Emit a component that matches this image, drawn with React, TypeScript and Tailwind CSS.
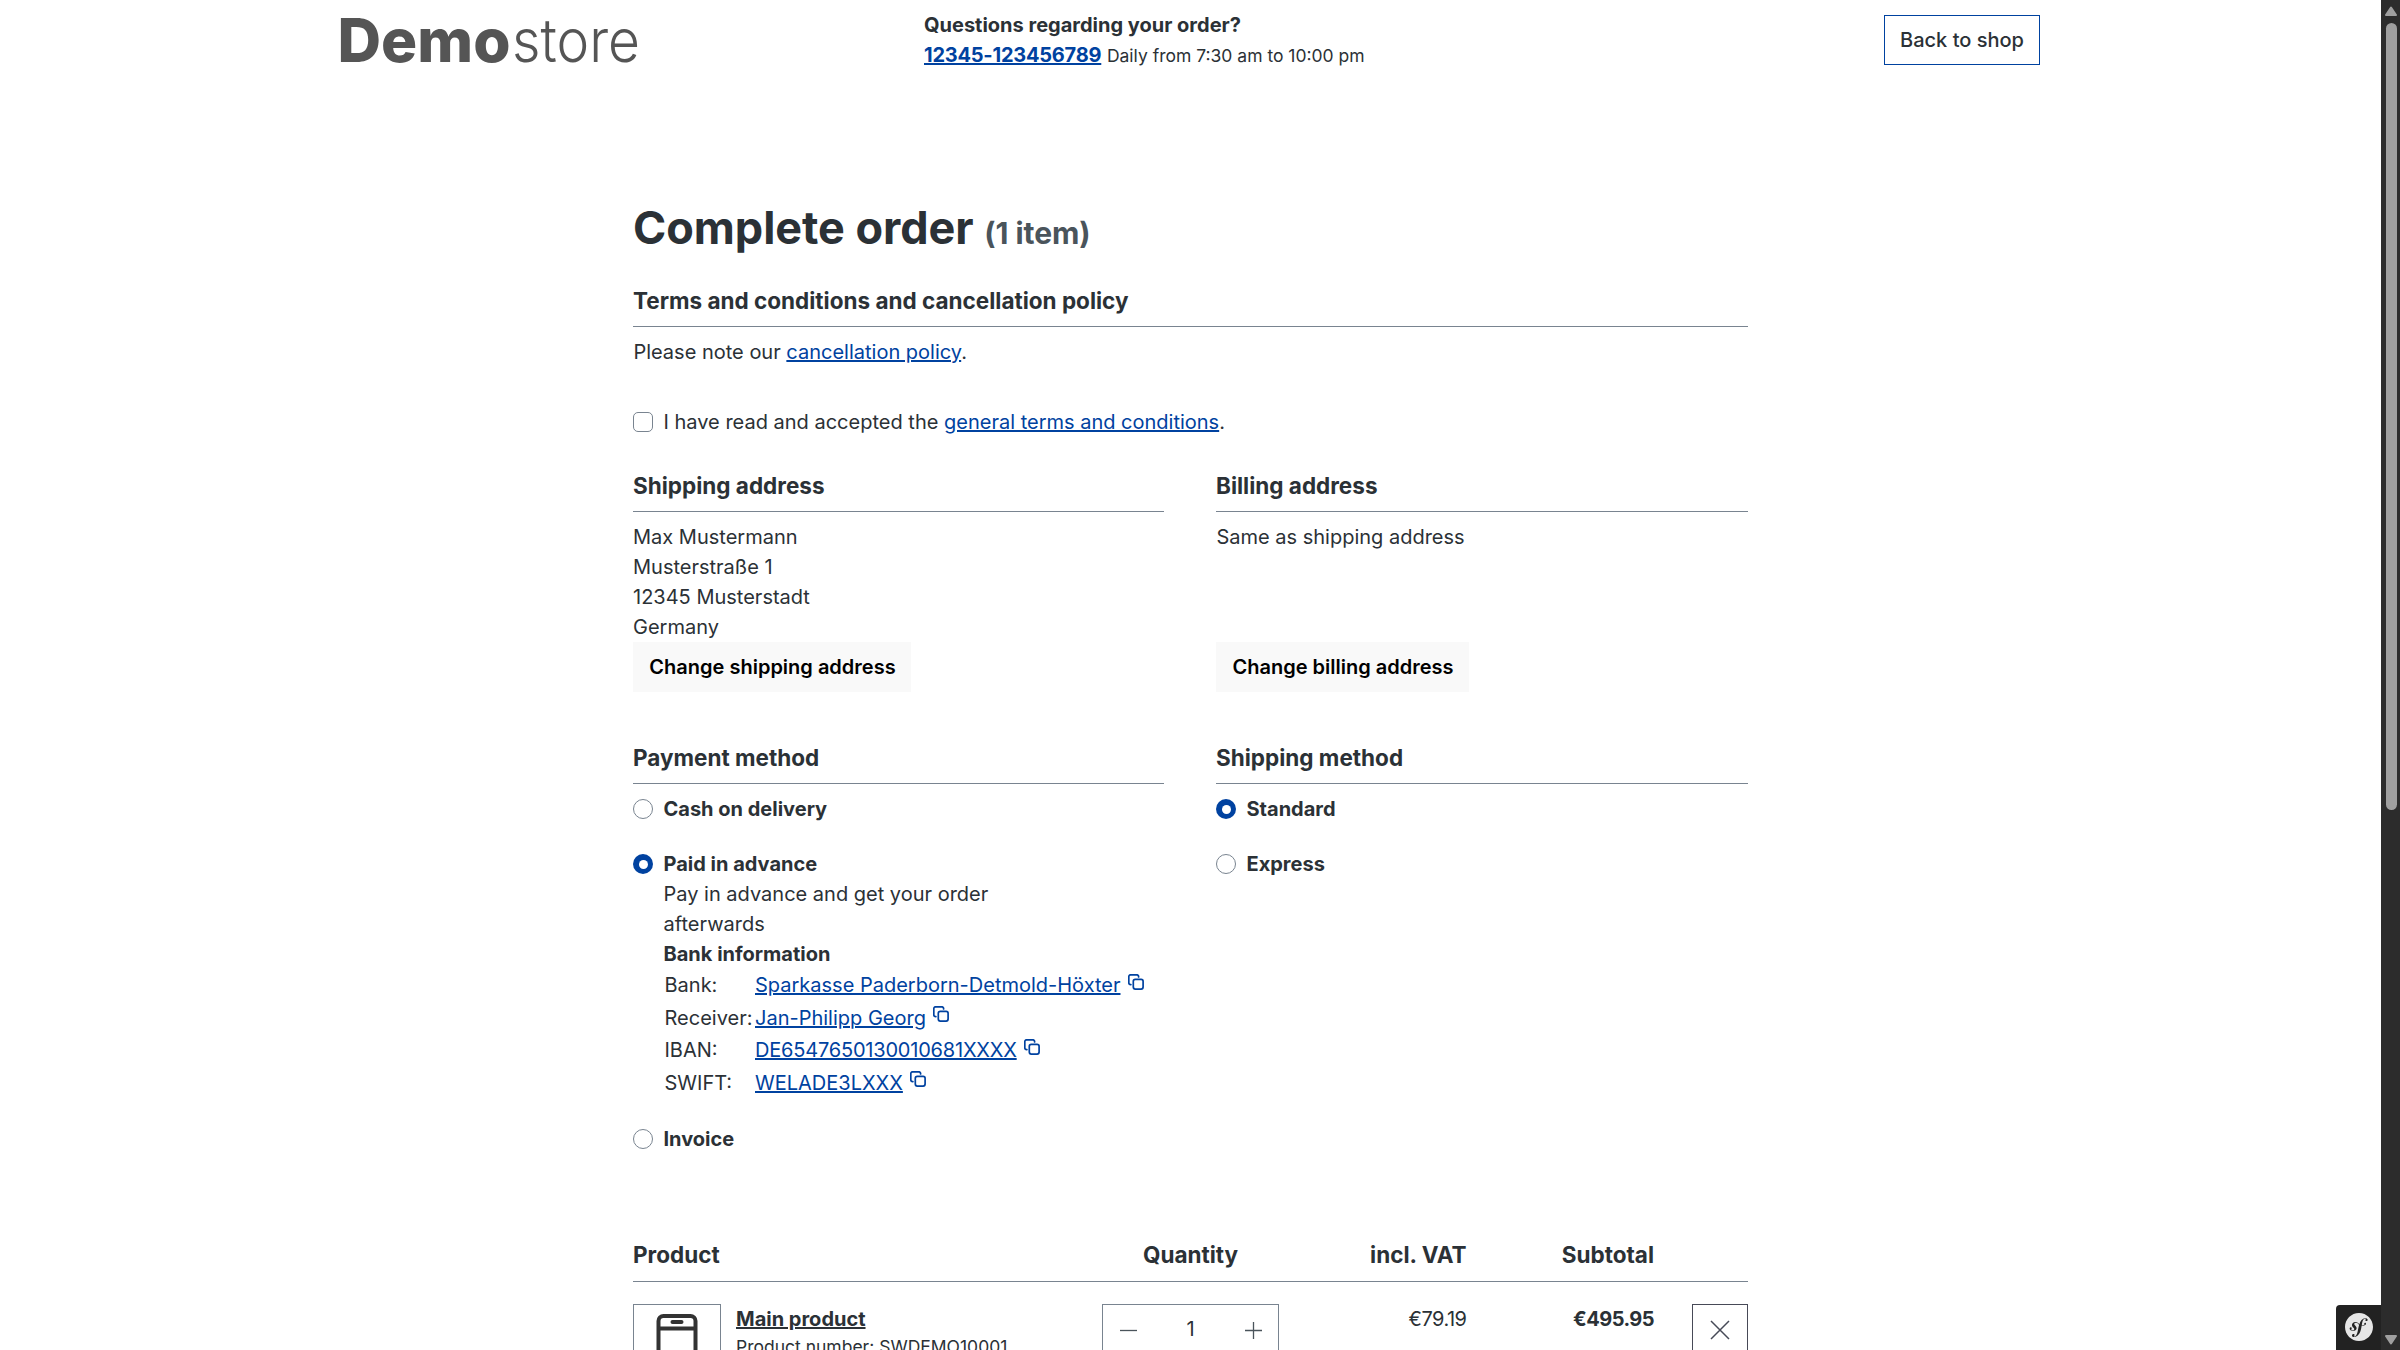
import type { ReactNode } from 'react';
import { SiSymfony } from 'react-icons/si';

const HEADING = 'h-[43px] border-b border-[#798490] text-[22.5px] leading-[34px] font-bold text-[#2b3136]';

function Link({ children }: { children: ReactNode }) {
  return (
    <a href="#" className="text-[#0042a0] underline">
      {children}
    </a>
  );
}

function Heading({ children }: { children: ReactNode }) {
  return <h2 className={HEADING}>{children}</h2>;
}

function Radio({ checked }: { checked?: boolean }) {
  return checked ? (
    <span className="mt-[5px] flex size-5 shrink-0 items-center justify-center rounded-full bg-[#0042a0]">
      <span className="size-[9px] rounded-full bg-white" />
    </span>
  ) : (
    <span className="mt-[5px] size-5 shrink-0 rounded-full border border-[#798490] bg-white" />
  );
}

function Option({ label, checked, children }: { label: string; checked?: boolean; children?: ReactNode }) {
  return (
    <div className="flex gap-[10.5px]">
      <Radio checked={checked} />
      <div>
        <div className="font-bold">{label}</div>
        {children}
      </div>
    </div>
  );
}

function CopyIcon() {
  return (
    <svg className="ml-[7px] mt-[3.5px] size-4 shrink-0" viewBox="0 0 16 16" fill="none" stroke="#0042a0" strokeWidth="1.7" strokeLinecap="round">
      <rect x="5.3" y="5.3" width="9.8" height="9.8" rx="2" />
      <path d="M2.9 10.6h-.3A1.8 1.8 0 0 1 .8 8.8V2.6A1.8 1.8 0 0 1 2.6.8H8.8a1.8 1.8 0 0 1 1.8 1.8v.3" />
    </svg>
  );
}

const BANK = [
  { label: 'Bank:', value: 'Sparkasse Paderborn-Detmold-Höxter', spacing: '' },
  { label: 'Receiver:', value: 'Jan-Philipp Georg', spacing: '' },
  { label: 'IBAN:', value: 'DE6547650130010681XXXX', spacing: 'tracking-[-0.2px]' },
  { label: 'SWIFT:', value: 'WELADE3LXXX', spacing: '' },
];

function Header() {
  return (
    <header className="ml-[331px] flex h-[65px] w-[1709px] items-start">
      <svg className="h-[80px] w-[320px] shrink-0" viewBox="0 0 320 80" fill="#555555">
        <text x="6.5" y="62" fontFamily="Inter" fontSize="60.5" fontWeight="850" textLength="173" lengthAdjust="spacingAndGlyphs">
          Demo
        </text>
        <text x="181" y="62" fontFamily="Inter" fontSize="60" fontWeight="300" textLength="128" lengthAdjust="spacingAndGlyphs">
          store
        </text>
      </svg>
      <div className="ml-[273px] mt-2.5 flex-1 leading-[30px]">
        <div className="font-bold">Questions regarding your order?</div>
        <div>
          <a href="#" className="font-bold tracking-[-0.22px] text-[#0042a0] underline">12345-123456789</a>{' '}
          <span className="text-[17.5px]">Daily from 7:30 am to 10:00 pm</span>
        </div>
      </div>
      <a href="#" className="mt-[15px] flex h-[50px] w-[156px] items-center justify-center border border-[#0042a0] font-medium">
        Back to shop
      </a>
    </header>
  );
}

function Cart() {
  return (
    <section className="mt-[84px]">
      <div className="flex h-11 border-b border-[#798490] text-[22.5px] leading-[34px] font-bold">
        <div className="w-[469px]">Product</div>
        <div className="w-[177px] text-center">Quantity</div>
        <div className="w-[187.5px] text-right">incl. VAT</div>
        <div className="w-[187.5px] text-right">Subtotal</div>
      </div>
      <div className="mt-[22px] flex h-[88px] items-start">
        <div className="flex size-[88px] shrink-0 justify-center border border-[#798490] pt-[9px]">
          <svg className="h-[68px] w-[42px]" viewBox="0 0 42 68" fill="none" stroke="#333333" strokeWidth="4">
            <rect x="2.5" y="2" width="37" height="64" rx="5" />
            <path d="M2.5 14.5h37" />
            <path d="M16.5 8h9" strokeLinecap="round" />
          </svg>
        </div>
        <div className="ml-[15px] w-[366px] shrink-0">
          <a href="#" className="block font-bold underline">Main product</a>
          <div className="text-[17.5px] leading-[26px]">Product number: SWDEMO10001</div>
        </div>
        <div className="flex h-[53px] w-[177px] shrink-0 items-center justify-between border border-[#798490] px-[15px]">
          <svg className="size-5" viewBox="0 0 20 20" stroke="#4a545b" strokeWidth="1.3"><path d="M2 9.5h17" /></svg>
          <span className="-mt-[3px]">1</span>
          <svg className="size-5" viewBox="0 0 20 20" stroke="#4a545b" strokeWidth="1.3"><path d="M2 9.500h17M10.500 1v17" /></svg>
        </div>
        <div className="w-[187.5px] text-right tracking-[-0.5px]">€79.19</div>
        <div className="w-[187.5px] text-right font-bold tracking-[-0.55px]">€495.95</div>
        <div className="ml-[38px] flex h-[53px] w-14 shrink-0 items-center justify-center border border-[#474a57] pb-px">
          <svg className="size-5" viewBox="0 0 20 20" stroke="#474a57" strokeWidth="1.5"><path d="M1 1l18 18M19 1L1 19" /></svg>
        </div>
      </div>
    </section>
  );
}

export default function App() {
  return (
    <div className="flex h-[1350px] w-[2400px] overflow-hidden bg-white font-[Inter,sans-serif] text-[20px] leading-[30px] text-[#2b3136]">
      <div className="relative w-[2381px] shrink-0 overflow-hidden">
        <Header />
        <main className="ml-[633px] mt-[136px] w-[1115px]">
          <h1 className="h-[54px] text-[45px] leading-[54px] font-bold tracking-[-0.04px]">
            Complete order <small className="text-[30px] text-[#4a545b]">(1 item)</small>
          </h1>
          <section className="mt-[29px]">
            <Heading>Terms and conditions and cancellation policy</Heading>
            <p className="mt-2.5 pl-[0.4px]">
              Please note our <Link>cancellation policy</Link>.
            </p>
            <div className="mt-10 flex gap-[10.5px]">
              <span className="mt-[5px] size-5 rounded-[5px] border border-[#798490]" />
              <span>
                I have read and accepted the <Link>general terms and conditions</Link>.
              </span>
            </div>
          </section>
          <div className="mt-8 grid grid-cols-[531px_532px] gap-x-[52px]">
            <section>
              <Heading>Shipping address</Heading>
              <address className="mt-2.5 h-[120px] not-italic">
                Max Mustermann<br />Musterstraße 1<br />12345 Musterstadt<br />Germany
              </address>
              <button className="flex h-[50px] w-[278px] items-center justify-center bg-[#f9f9f9] pl-px font-semibold text-black">
                Change shipping address
              </button>
            </section>
            <section>
              <Heading>Billing address</Heading>
              <p className="mt-2.5 h-[120px] pl-[0.4px]">Same as shipping address</p>
              <button className="flex h-[50px] w-[253px] items-center justify-center bg-[#f9f9f9] pl-px font-semibold text-black">
                Change billing address
              </button>
            </section>
          </div>
          <div className="mt-[49px] grid grid-cols-[531px_532px] gap-x-[52px]">
            <section>
              <Heading>Payment method</Heading>
              <div className="mt-2.5 flex flex-col gap-[25px]">
                <Option label="Cash on delivery" />
                <Option label="Paid in advance" checked>
                  <p className="w-[350px]">Pay in advance and get your order afterwards</p>
                  <div className="font-bold">Bank information</div>
                  <div className="-mb-px pl-px pt-px">
                    {BANK.map(({ label, value, spacing }) => (
                      <div key={label} className="flex h-[32.5px] whitespace-nowrap">
                        <span className="w-[90.5px] shrink-0">{label}</span>
                        <span className={spacing}>
                          <Link>{value}</Link>
                        </span>
                        <CopyIcon />
                      </div>
                    ))}
                  </div>
                </Option>
                <Option label="Invoice" />
              </div>
            </section>
            <section>
              <Heading>Shipping method</Heading>
              <div className="mt-2.5 flex flex-col gap-[25px]">
                <Option label="Standard" checked />
                <Option label="Express" />
              </div>
            </section>
          </div>
          <Cart />
        </main>
        <div className="absolute bottom-0 right-0 flex h-[45px] w-[45px] items-center justify-center rounded-tl bg-[#222222] pb-px">
          <SiSymfony className="size-7 text-[#e6e6e6]" />
        </div>
      </div>
      <div className="flex w-[19px] shrink-0 flex-col items-center bg-[#2c2c2c] pl-px">
        <svg className="mt-1.5 h-2.5 w-3 shrink-0" viewBox="0 0 12 10" fill="#9f9f9f" stroke="#9f9f9f" strokeWidth="2" strokeLinejoin="round"><path d="M1 9L6 1.5L11 9z" /></svg>
        <div className="mt-[7px] h-[787px] w-[11px] shrink-0 rounded-full bg-[#9f9f9f]" />
        <svg className="mb-[5px] mt-auto h-2.5 w-3 shrink-0" viewBox="0 0 12 10" fill="#9f9f9f" stroke="#9f9f9f" strokeWidth="2" strokeLinejoin="round"><path d="M1 1h10L6 8.5z" /></svg>
      </div>
    </div>
  );
}
